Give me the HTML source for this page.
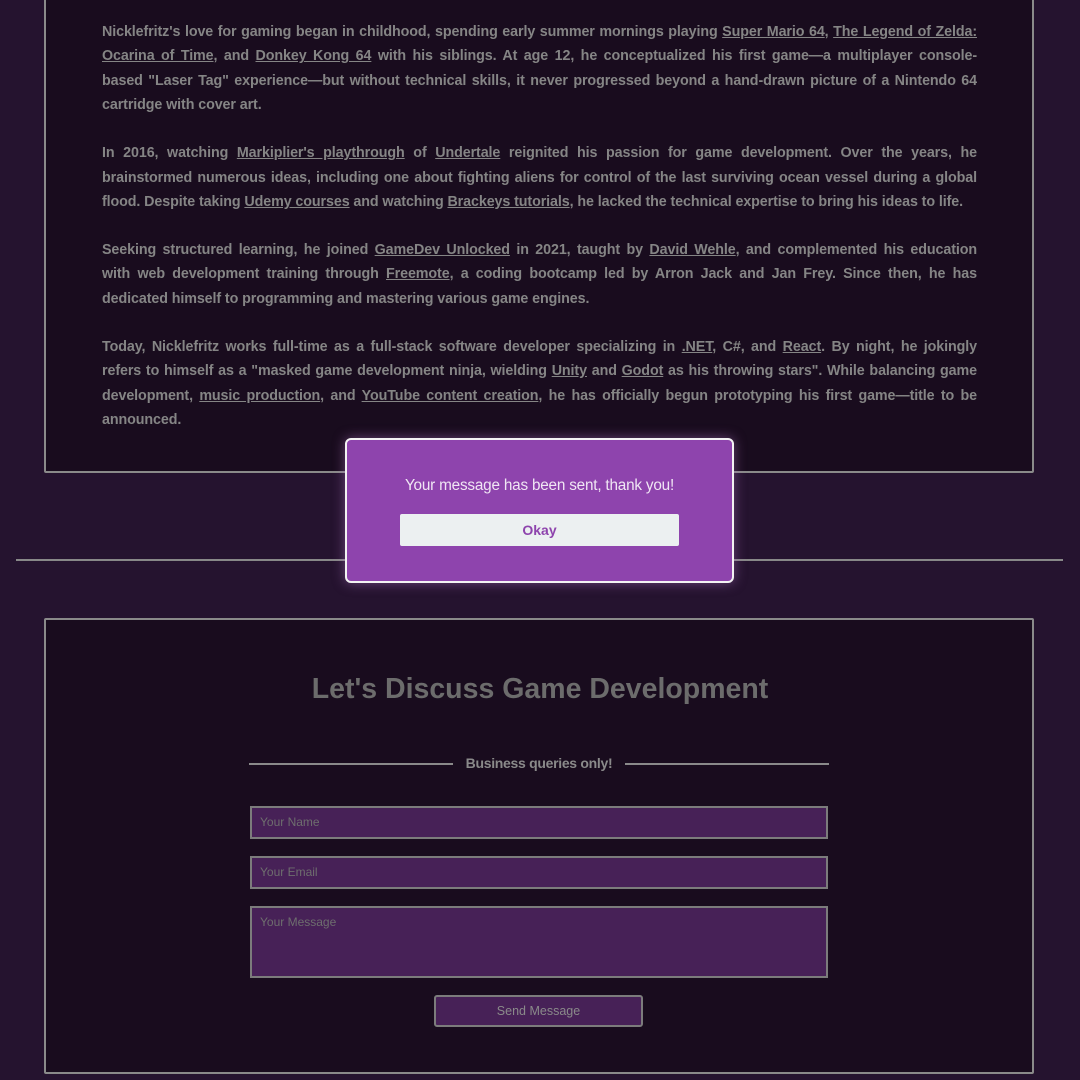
<!DOCTYPE html>
<html><head><style>
*{box-sizing:border-box;margin:0;padding:0}
body{width:1080px;height:1080px;background:#25132f;font-family:"Liberation Sans",sans-serif;position:relative;overflow:hidden}
.box{position:absolute;left:44px;width:990px;background:#190c1e;border:2px solid #8a8a8a;border-radius:2px}
.txt{position:absolute;left:102px;top:20px;width:875px;color:#858585;font-weight:bold;font-size:14.3px;line-height:24.4px;letter-spacing:-0.1px}
.txt p{margin-bottom:23.6px}
.txt span{display:block;text-align:justify;text-align-last:justify}
.txt span.l{text-align-last:left}
.txt u{text-decoration:underline}
hr.h{position:absolute;left:16px;top:559px;width:1047px;border:0;border-top:2px solid #888}
h2{position:absolute;top:673px;left:0;width:1080px;text-align:center;color:#6c6c6c;font-size:28.5px;font-weight:bold}
.ln{position:absolute;top:763px;height:2px;background:#8a8a8a}
.bq{position:absolute;top:755px;left:453px;width:172px;text-align:center;color:#8a8a8a;font-weight:bold;font-size:14px;letter-spacing:-0.3px}
.in{position:absolute;left:250px;width:578px;background:#472157;border:2px solid #7c7c7c;color:#6e6e6e;font-size:12px;padding:7px 8px}
.btn{position:absolute;left:434px;top:995px;width:209px;height:32px;background:#472157;border:2px solid #7c7c7c;border-radius:3px;color:#8a8a8a;font-size:12.5px;text-align:center;line-height:28px}
.modal{position:absolute;left:345px;top:438px;width:389px;height:145px;background:#8e44ad;border:2px solid #f3f3f3;border-radius:6px;box-shadow:0 0 12px rgba(180,120,200,.5)}
.modal .m{position:absolute;top:37px;width:100%;text-align:center;color:#f0e6f4;font-size:15.3px;letter-spacing:-0.2px}
.modal .ok{position:absolute;left:53px;top:74px;width:279px;height:32px;background:#ecf0f1;border-radius:2px;color:#8e44ad;font-weight:bold;font-size:14px;text-align:center;line-height:32px}
</style></head><body>
<div class="box" style="top:-10px;height:483px"></div>
<div class="txt">
<p><span>Nicklefritz's love for gaming began in childhood, spending early summer mornings playing <u>Super Mario 64</u>, <u>The Legend of Zelda:</u></span><span><u>Ocarina of Time</u>, and <u>Donkey Kong 64</u> with his siblings. At age 12, he conceptualized his first game—a multiplayer console-</span><span>based "Laser Tag" experience—but without technical skills, it never progressed beyond a hand-drawn picture of a Nintendo 64</span><span class="l">cartridge with cover art.</span></p>
<p><span>In 2016, watching <u>Markiplier's playthrough</u> of <u>Undertale</u> reignited his passion for game development. Over the years, he</span><span>brainstormed numerous ideas, including one about fighting aliens for control of the last surviving ocean vessel during a global</span><span class="l">flood. Despite taking <u>Udemy courses</u> and watching <u>Brackeys tutorials</u>, he lacked the technical expertise to bring his ideas to life.</span></p>
<p><span>Seeking structured learning, he joined <u>GameDev Unlocked</u> in 2021, taught by <u>David Wehle</u>, and complemented his education</span><span>with web development training through <u>Freemote</u>, a coding bootcamp led by Arron Jack and Jan Frey. Since then, he has</span><span class="l">dedicated himself to programming and mastering various game engines.</span></p>
<p><span>Today, Nicklefritz works full-time as a full-stack software developer specializing in <u>.NET</u>, C#, and <u>React</u>. By night, he jokingly</span><span>refers to himself as a "masked game development ninja, wielding <u>Unity</u> and <u>Godot</u> as his throwing stars". While balancing game</span><span>development, <u>music production</u>, and <u>YouTube content creation</u>, he has officially begun prototyping his first game—title to be</span><span class="l">announced.</span></p>
</div>
<hr class="h">
<div class="box" style="top:618px;height:456px"></div>
<h2>Let's Discuss Game Development</h2>
<div class="ln" style="left:249px;width:204px"></div>
<div class="ln" style="left:625px;width:204px"></div>
<div class="bq">Business queries only!</div>
<div class="in" style="top:806px;height:33px">Your Name</div>
<div class="in" style="top:856px;height:33px">Your Email</div>
<div class="in" style="top:906px;height:72px">Your Message</div>
<div class="btn">Send Message</div>
<div class="modal"><div class="m">Your message has been sent, thank you!</div><div class="ok">Okay</div></div>
</body></html>
